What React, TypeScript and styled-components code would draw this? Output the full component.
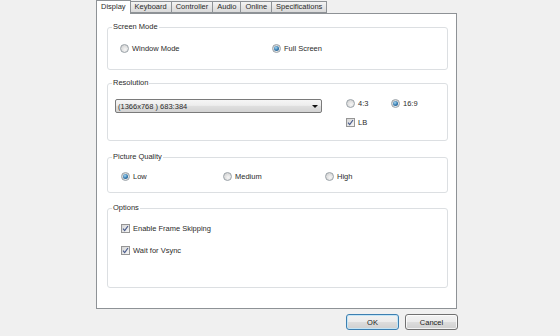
import * as React from 'react'
import styled, {createGlobalStyle} from 'styled-components'

const GlobalStyle = createGlobalStyle`
  html, body {
    margin: 0;
    background: #f0f0f0;
  }
  body {
    font-family: "Liberation Sans", Arial, sans-serif;
    font-size: 7.5px;
    color: #2b2b2b;
  }
`

const Dialog = styled.div`
  width: 362px;
  margin-left: 96px;
  display: flex;
  flex-direction: column;
`

const TabStrip = styled.div`
  display: flex;
  align-items: flex-end;
  height: 13px;
  position: relative;
  z-index: 1;
`

const Tab = styled.div<{$active?: boolean}>`
  box-sizing: border-box;
  height: ${p => (p.$active ? 14 : 12)}px;
  margin-bottom: ${p => (p.$active ? -1 : 0)}px;
  margin-right: -1px;
  padding: 0 4px;
  line-height: ${p => (p.$active ? 12 : 10)}px;
  border: 1px solid #8e9296;
  border-bottom: ${p => (p.$active ? 'none' : '1px solid #8e9296')};
  background: ${p => (p.$active ? '#fff' : 'linear-gradient(#f4f4f4, #e6e6e6 50%, #dadada)')};
  white-space: nowrap;
  position: relative;
  z-index: ${p => (p.$active ? 2 : 1)};
`

const Panel = styled.div`
  width: 361px;
  box-sizing: border-box;
  background: #fff;
  border: 1px solid #8e9296;
  padding: 8px 8px 20px 10px;
`

const GroupBox = styled.fieldset<{$mt: number}>`
  width: 341px;
  box-sizing: border-box;
  min-width: 0;
  margin: ${p => p.$mt}px 0 0;
  padding: 0;
  border: 1px solid #dcdfe2;
  border-radius: 3px;
`

const Legend = styled.legend`
  margin-left: 4px;
  padding: 0 1px;
  line-height: 10px;
`

const Body = styled.div<{$pt: number; $pb: number; $pl: number}>`
  padding: ${p => p.$pt}px 0 ${p => p.$pb}px ${p => p.$pl}px;
`

const Row = styled.div<{$col: number}>`
  display: grid;
  grid-auto-flow: column;
  grid-auto-columns: ${p => p.$col}px;
  height: 10px;
`

const Stack = styled.div`
  display: flex;
  flex-direction: column;
  gap: 12px;
`

const Option = styled.label`
  display: flex;
  align-items: center;
  gap: 3px;
  height: 10px;
  white-space: nowrap;
`

const RadioMark = styled.span<{$on?: boolean}>`
  flex: none;
  width: 9px;
  height: 9px;
  box-sizing: border-box;
  border-radius: 50%;
  border: 1px solid #9aa2a8;
  background: radial-gradient(circle at 60% 65%, #f6f6f6 0, #dcdcdc 60%, #c8c8c8 100%);
  display: flex;
  align-items: center;
  justify-content: center;

  &::after {
    content: '';
    display: ${p => (p.$on ? 'block' : 'none')};
    width: 5px;
    height: 5px;
    border-radius: 50%;
    background: radial-gradient(circle at 40% 35%, #a8d8f3 0, #3278ad 55%, #1c4e7b 100%);
  }
`

const CheckMark = styled.span`
  flex: none;
  width: 9px;
  height: 9px;
  box-sizing: border-box;
  border: 1px solid #959595;
  background: linear-gradient(135deg, #d6d6d6, #f6f6f6);
  display: flex;
  align-items: center;
  justify-content: center;
`

const ResLayout = styled.div`
  display: flex;
  align-items: flex-start;
  gap: 24px;
`

const Select = styled.div`
  width: 207px;
  height: 14px;
  margin-top: 1px;
  box-sizing: border-box;
  border: 1px solid #7a7a7a;
  border-radius: 2px;
  background: linear-gradient(#f5f5f5, #ededed 45%, #dfdfdf 50%, #d3d3d3);
  display: flex;
  align-items: center;
  justify-content: space-between;
  padding: 0 3px 0 2px;
  white-space: nowrap;
`

const Arrow = styled.span`
  width: 0;
  height: 0;
  border-left: 3px solid transparent;
  border-right: 3px solid transparent;
  border-top: 3px solid #111;
`

const AspectGrid = styled.div`
  display: grid;
  grid-template-columns: 45px auto;
  grid-template-rows: 10px 10px;
  row-gap: 9px;
`

const ButtonRow = styled.div`
  display: flex;
  justify-content: flex-end;
  gap: 6px;
  margin-top: 5px;
`

const Button = styled.button<{$default?: boolean}>`
  width: 53px;
  height: 16px;
  padding: 0;
  font: inherit;
  color: #1b1b1b;
  border: 1px solid ${p => (p.$default ? '#3c7fb1' : '#707070')};
  border-radius: 3px;
  background: linear-gradient(#f2f2f2, #ebebeb 50%, #dddddd 50%, #cfcfcf);
  box-shadow: inset 0 0 0 1px ${p => (p.$default ? '#c4e5f6' : 'rgba(255,255,255,0.75)')};
`

const Radio = ({label, on}: {label: string; on?: boolean}) => (
  <Option>
    <RadioMark $on={on}/>
    {label}
  </Option>
)

const Check = ({label}: {label: string}) => (
  <Option>
    <CheckMark>
      <svg width="7" height="7" viewBox="0 0 7 7">
        <path d="M1 3.7 L2.7 5.6 L6 1" fill="none" stroke="#4a5c8c" strokeWidth="1.2"/>
      </svg>
    </CheckMark>
    {label}
  </Option>
)

const tabs = ['Display', 'Keyboard', 'Controller', 'Audio', 'Online', 'Specifications']

export default function App() {
  return (
    <>
      <GlobalStyle/>
      <Dialog>
        <TabStrip>
          {tabs.map((t, i) => <Tab key={t} $active={i === 0}>{t}</Tab>)}
        </TabStrip>
        <Panel>
          <GroupBox $mt={0}>
            <Legend>Screen Mode</Legend>
            <Body $pt={11} $pb={16} $pl={12}>
              <Row $col={152}>
                <Radio label="Window Mode"/>
                <Radio label="Full Screen" on/>
              </Row>
            </Body>
          </GroupBox>

          <GroupBox $mt={8}>
            <Legend>Resolution</Legend>
            <Body $pt={10} $pb={13} $pl={7}>
              <ResLayout>
                <Select>
                  <span>(1366x768 ) 683:384</span>
                  <Arrow/>
                </Select>
                <AspectGrid>
                  <Radio label="4:3"/>
                  <Radio label="16:9" on/>
                  <Check label="LB"/>
                </AspectGrid>
              </ResLayout>
            </Body>
          </GroupBox>

          <GroupBox $mt={11}>
            <Legend>Picture Quality</Legend>
            <Body $pt={9} $pb={11} $pl={13}>
              <Row $col={102}>
                <Radio label="Low" on/>
                <Radio label="Medium"/>
                <Radio label="High"/>
              </Row>
            </Body>
          </GroupBox>

          <GroupBox $mt={10}>
            <Legend>Options</Legend>
            <Body $pt={10} $pb={32} $pl={13}>
              <Stack>
                <Check label="Enable Frame Skipping"/>
                <Check label="Wait for Vsync"/>
              </Stack>
            </Body>
          </GroupBox>
        </Panel>
        <ButtonRow>
          <Button $default>OK</Button>
          <Button>Cancel</Button>
        </ButtonRow>
      </Dialog>
    </>
  )
}
